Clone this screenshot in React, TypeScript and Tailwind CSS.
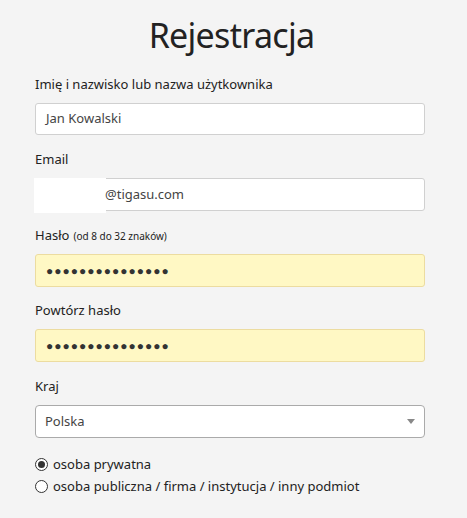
import React from "react";

function Label({ children }: { children: React.ReactNode }) {
  return <div className="text-[13px] leading-[19px] text-[#222]">{children}</div>;
}

export default function App() {
  return (
    <div
      className="min-h-[518px] w-full bg-[#f4f4f4] px-[35px] pt-[12px]"
      style={{ fontFamily: '"Noto Sans", "Open Sans", sans-serif' }}
    >
      {/* TITLE */}
      <h1 className="text-center text-[34px] leading-[46px] tracking-[-0.7px] text-[#222] pr-[4px]">Rejestracja</h1>

      <form className="mt-[17px] flex w-[390px] flex-col">
        <Label>Imię i nazwisko lub nazwa użytkownika</Label>
        <div className="mt-[9px] flex h-[32px] items-center rounded-[3px] border border-[#d0d0d0] bg-white px-[10px] text-[13px] text-[#444]">
          Jan Kowalski
        </div>

        <div className="mt-[15px]">
          <Label>Email</Label>
        </div>
        <div className="relative mt-[9px] flex h-[33px] items-center rounded-[3px] border border-[#d0d0d0] bg-white pl-[69px] text-[13px] text-[#444]">
          <span className="absolute left-[-2px] top-[-1px] h-[35px] w-[72px] bg-white" />
          <span className="relative">@tigasu.com</span>
        </div>

        <div className="mt-[15px] flex items-baseline gap-[4px]">
          <Label>Hasło</Label>
          <span className="text-[10px] text-[#222]">(od 8 do 32 znaków)</span>
        </div>
        <div className="mt-[9px] flex h-[33px] items-center rounded-[3px] border border-[#ecdca0] bg-[#fff8c4] px-[10px] text-[12px] tracking-[1px] text-[#333]">
          ●●●●●●●●●●●●●●●
        </div>

        <div className="mt-[14px]">
          <Label>Powtórz hasło</Label>
        </div>
        <div className="mt-[9px] flex h-[33px] items-center rounded-[3px] border border-[#ecdca0] bg-[#fff8c4] px-[10px] text-[12px] tracking-[1px] text-[#333]">
          ●●●●●●●●●●●●●●●
        </div>

        <div className="mt-[15px]">
          <Label>Kraj</Label>
        </div>
        <div className="mt-[9px] flex h-[33px] items-center justify-between rounded-[4px] border border-[#aaa] bg-white pl-[9px] pr-[9px] text-[13px] text-[#444]">
          <span>Polska</span>
          <span className="h-0 w-0 border-x-[4px] border-t-[5px] border-x-transparent border-t-[#888]" />
        </div>

        {/* RADIOS */}
        <div className="mt-[17px] flex flex-col gap-[3px] text-[13px] text-[#222]">
          <label className="flex items-center gap-[5px] leading-[19px]">
            <span className="flex h-[13px] w-[13px] items-center justify-center rounded-full border border-[#333] bg-white">
              <span className="h-[7px] w-[7px] rounded-full bg-[#333]" />
            </span>
            osoba prywatna
          </label>
          <label className="flex items-center gap-[5px] leading-[19px]">
            <span className="h-[13px] w-[13px] rounded-full border border-[#333] bg-white" />
            osoba publiczna / firma / instytucja / inny podmiot
          </label>
        </div>
      </form>
    </div>
  );
}
